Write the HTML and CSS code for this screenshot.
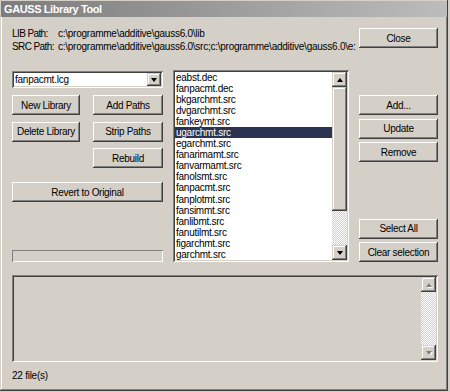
FILE: index.html
```html
<!DOCTYPE html>
<html lang="en">
<head>
  <meta charset="UTF-8">
  <title>GAUSS Library Tool</title>
  <link rel="stylesheet" href="styles.css">
</head>
<body>
  <div class="window">
    <div class="titlebar">GAUSS Library Tool</div>
    <div class="content">
      <div class="header">
        <div class="paths">
          <div class="path-row"><span class="path-label">LIB Path:</span><span class="path-value">c:\programme\additive\gauss6.0\lib</span></div>
          <div class="path-row"><span class="path-label">SRC Path:</span><span class="path-value">c:\programme\additive\gauss6.0\src;c:\programme\additive\gauss6.0\e:</span></div>
        </div>
        <button class="btn btn-close">Close</button>
      </div>

      <div class="main">
        <div class="left">
          <div class="combo">
            <span class="combo-text">fanpacmt.lcg</span>
            <span class="scroll-btn"><span class="arrow down"></span></span>
          </div>
          <div class="btn-grid">
            <button class="btn">New Library</button>
            <button class="btn">Add Paths</button>
            <button class="btn">Delete Library</button>
            <button class="btn">Strip Paths</button>
            <button class="btn btn-rebuild">Rebuild</button>
          </div>
          <button class="btn btn-revert">Revert to Original</button>
          <div class="progress"></div>
        </div>

        <div class="listbox">
          <ul class="items">
            <li>eabst.dec</li>
            <li>fanpacmt.dec</li>
            <li>bkgarchmt.src</li>
            <li>dvgarchmt.src</li>
            <li>fankeymt.src</li>
            <li class="selected">ugarchmt.src</li>
            <li>egarchmt.src</li>
            <li>fanarimamt.src</li>
            <li>fanvarmamt.src</li>
            <li>fanolsmt.src</li>
            <li>fanpacmt.src</li>
            <li>fanplotmt.src</li>
            <li>fansimmt.src</li>
            <li>fanlibmt.src</li>
            <li>fanutilmt.src</li>
            <li>figarchmt.src</li>
            <li>garchmt.src</li>
          </ul>
          <div class="vscroll">
            <span class="scroll-btn"><span class="arrow up"></span></span>
            <span class="thumb"></span>
            <span class="track"></span>
            <span class="scroll-btn"><span class="arrow down"></span></span>
          </div>
        </div>

        <div class="right">
          <div class="btn-stack">
            <button class="btn">Add...</button>
            <button class="btn">Update</button>
            <button class="btn">Remove</button>
          </div>
          <div class="btn-stack">
            <button class="btn">Select All</button>
            <button class="btn">Clear selection</button>
          </div>
        </div>
      </div>

      <div class="log">
        <div class="log-area"></div>
        <div class="vscroll disabled">
          <span class="scroll-btn"><span class="arrow up"></span></span>
          <span class="track"></span>
          <span class="scroll-btn"><span class="arrow down"></span></span>
        </div>
      </div>

      <div class="status">22 file(s)</div>
    </div>
  </div>
</body>
</html>
```

FILE: styles.css
```css
body {
  margin: 0;
  background: #d4d0c8;
  font-family: "Liberation Sans", Arial, sans-serif;
  font-size: 10px;
  color: #000;
}
.window {
  width: 448px;
  height: 391px;
  box-sizing: border-box;
  padding: 1px;
  box-shadow: inset -1px -1px #404040, inset 1px 1px #d4d0c8, inset -2px -2px #808080, inset 2px 2px #fff;
  display: flex;
  flex-direction: column;
}
.titlebar {
  height: 16px;
  line-height: 16px;
  padding-left: 3px;
  background: linear-gradient(90deg, #7c7c7c, #bcbcbc);
  color: #fff;
  font-weight: bold;
  font-size: 11px;
  letter-spacing: -0.4px;
}
.content {
  padding: 10px 9px 0 11px;
  display: flex;
  flex-direction: column;
}

/* header with paths */
.header {
  display: flex;
  justify-content: space-between;
  align-items: flex-start;
  height: 26px;
}
.paths {
  flex: 1;
  min-width: 0;
  overflow: hidden;
}
.path-row {
  display: flex;
  height: 13px;
  line-height: 13px;
  white-space: nowrap;
  letter-spacing: -0.25px;
}
.path-label {
  width: 46px;
  flex: none;
  letter-spacing: -0.6px;
}

/* buttons */
.btn {
  height: 20px;
  padding: 0;
  border: none;
  background: #d4d0c8;
  box-shadow: inset -1px -1px #404040, inset 1px 1px #fff, inset -2px -2px #808080, inset 2px 2px #d4d0c8;
  font-family: inherit;
  font-size: 10px;
  letter-spacing: -0.3px;
  color: #000;
}
.btn-close {
  width: 79px;
  margin-top: 1px;
}

/* main part */
.main {
  display: grid;
  grid-template-columns: 151px 1fr 79px;
  column-gap: 10px;
  height: 192px;
  margin-top: 17px;
}
.left {
  display: flex;
  flex-direction: column;
}
.combo {
  height: 17px;
  margin-top: 1px;
  display: flex;
  align-items: center;
  background: #fff;
  box-sizing: border-box;
  padding: 2px;
  box-shadow: inset 1px 1px #808080, inset -1px -1px #fff, inset 2px 2px #404040, inset -2px -2px #d4d0c8;
}
.combo-text {
  flex: 1;
  padding-left: 1px;
  letter-spacing: -0.25px;
}
.combo .scroll-btn {
  height: 13px;
  width: 14px;
}
.btn-grid {
  display: grid;
  grid-template-columns: 68px 70px;
  justify-content: space-between;
  grid-auto-rows: 20px;
  row-gap: 6.5px;
  margin-top: 7px;
}
.btn-rebuild {
  grid-column: 2;
}
.btn-revert {
  margin-top: 14px;
}
.progress {
  margin-top: auto;
  height: 12px;
  box-shadow: inset 1px 1px #808080, inset -1px -1px #fff;
}

/* list */
.listbox {
  display: flex;
  background: #fff;
  padding: 2px;
  box-shadow: inset 1px 1px #808080, inset -1px -1px #fff, inset 2px 2px #404040, inset -2px -2px #d4d0c8;
  overflow: hidden;
}
.items {
  flex: 1;
  margin: 0;
  padding: 0;
  list-style: none;
  overflow: hidden;
  letter-spacing: -0.25px;
}
.items li {
  height: 11.05px;
  line-height: 11.05px;
  padding-left: 1px;
  white-space: nowrap;
}
.items li.selected {
  background: #2a3350;
  color: #fff;
}

/* scrollbars */
.vscroll {
  width: 15px;
  flex: none;
  display: flex;
  flex-direction: column;
}
.scroll-btn {
  width: 15px;
  height: 15px;
  flex: none;
  display: flex;
  align-items: center;
  justify-content: center;
  background: #d4d0c8;
  box-shadow: inset -1px -1px #404040, inset 1px 1px #d4d0c8, inset -2px -2px #808080, inset 2px 2px #fff;
}
.thumb {
  height: 124px;
  flex: none;
  background: #d4d0c8;
  box-shadow: inset -1px -1px #404040, inset 1px 1px #d4d0c8, inset -2px -2px #808080, inset 2px 2px #fff;
}
.track {
  flex: 1;
  background: repeating-conic-gradient(#fff 0 25%, #d4d0c8 0 50%) 0 0 / 2px 2px;
}
.arrow {
  width: 0;
  height: 0;
  border-left: 3.5px solid transparent;
  border-right: 3.5px solid transparent;
}
.arrow.up {
  border-bottom: 4px solid #000;
}
.arrow.down {
  border-top: 4px solid #000;
}
.vscroll.disabled .arrow.up {
  border-bottom-color: #808080;
  filter: drop-shadow(1px 1px 0 #fff);
}
.vscroll.disabled .arrow.down {
  border-top-color: #808080;
  filter: drop-shadow(1px 1px 0 #fff);
}

/* right column */
.right {
  display: flex;
  flex-direction: column;
  justify-content: space-between;
  padding-top: 25px;
}
.btn-stack {
  display: flex;
  flex-direction: column;
  gap: 3.5px;
}

/* bottom */
.log {
  display: flex;
  height: 87px;
  margin-top: 13px;
  padding: 2px;
  box-sizing: border-box;
  box-shadow: inset 1px 1px #808080, inset -1px -1px #fff, inset 2px 2px #404040, inset -2px -2px #d4d0c8;
}
.log-area {
  flex: 1;
}
.status {
  margin-top: 7px;
  line-height: 13px;
  letter-spacing: -0.25px;
}
```
